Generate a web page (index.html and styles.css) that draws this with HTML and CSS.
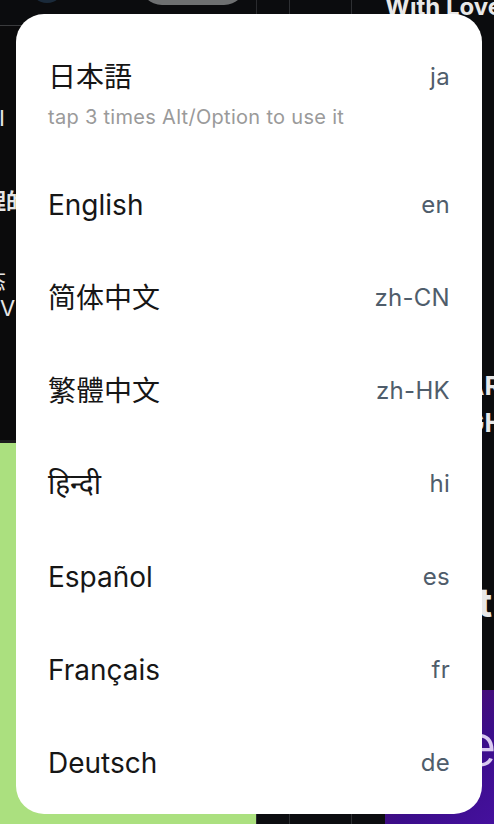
FILE: index.html
```html
<!DOCTYPE html>
<html lang="en">
<head>
    <meta charset="UTF-8">
    <meta name="viewport" content="width=device-width, initial-scale=1.0">
    <title>Language</title>
    <link rel="stylesheet" href="styles.css">
</head>
<body>
<!-- page behind the dialog -->
<div class="backdrop">
    <div class="col-left">
        <div class="pill"></div>
        <div class="dark-area">
            <div class="avatar"></div>
            <div class="frag frag-1">Use I</div>
            <div class="frag frag-2">管理的</div>
            <div class="frag frag-3">状态</div>
            <div class="frag frag-4">Wo V</div>
        </div>
        <div class="green-area"></div>
    </div>
    <div class="col-right">
        <div class="top-strip">
            <div class="cell"></div>
            <div class="cell wide"></div>
            <div class="title-frag">With Love</div>
        </div>
        <div class="side-frags">
            <div class="frag-r frag-r1">AR</div>
            <div class="frag-r frag-r2">GH</div>
            <div class="frag-r frag-r3">Let's</div>
        </div>
        <div class="bottom-strip">
            <div class="cell"></div>
            <div class="cell wide"></div>
            <div class="cell narrow"></div>
            <div class="purple-area">
                <span class="logo-e">e</span>
                <span class="logo-la">LA</span>
            </div>
        </div>
    </div>
</div>

<div class="lang-dialog">
    <ul class="lang-list">
        <li class="lang-item first">
            <div class="lang-name-wrap">
                <div class="lang-name">日本語</div>
                <div class="lang-hint">tap 3 times Alt/Option to use it</div>
            </div>
            <span class="lang-code">ja</span>
        </li>
        <li class="lang-item"><span class="lang-name">English</span><span class="lang-code">en</span></li>
        <li class="lang-item"><span class="lang-name" lang="zh-CN">简体中文</span><span class="lang-code">zh-CN</span></li>
        <li class="lang-item"><span class="lang-name" lang="zh-HK">繁體中文</span><span class="lang-code">zh-HK</span></li>
        <li class="lang-item"><span class="lang-name" lang="hi">हिन्दी</span><span class="lang-code">hi</span></li>
        <li class="lang-item"><span class="lang-name">Español</span><span class="lang-code">es</span></li>
        <li class="lang-item"><span class="lang-name">Français</span><span class="lang-code">fr</span></li>
        <li class="lang-item"><span class="lang-name">Deutsch</span><span class="lang-code">de</span></li>
    </ul>
</div>
</body>
</html>
```

FILE: styles.css
```css
* {
    margin: 0;
    padding: 0;
    box-sizing: border-box;
}
body {
    background: #0b0c0e;
    font-family: Inter, "Noto Sans CJK JP", "Noto Sans", sans-serif;
    overflow: hidden;
    height: 824px;
}

/* page behind */
.backdrop {
    display: flex;
    height: 824px;
}
.col-left {
    width: 256px;
    flex-shrink: 0;
    display: flex;
    flex-direction: column;
    position: relative;
}
.pill {
    position: absolute;
    z-index: 1;
    top: -40px;
    right: 10px;
    width: 106px;
    height: 45px;
    border-radius: 22px;
    background: #6e7071;
}
.dark-area {
    height: 443px;
    background: #0b0b0c;
    border-top: 25px solid #0b0c0e;
    border-bottom: 3px solid #1c1c1c;
    position: relative;
    padding-top: 80px;
    box-shadow: inset 0 1px 0 #3a3b3d;
}
.avatar {
    position: absolute;
    top: -56px;
    left: 30px;
    width: 34px;
    height: 34px;
    border-radius: 50%;
    background: #1a2a3a;
}
.frag {
    color: #e6e6e6;
    font-size: 22px;
    margin-left: -38px;
    white-space: nowrap;
}
.frag-1 { margin-left: -48px; }
.frag-2 { margin-top: 52px; font-weight: 600; }
.frag-3 { margin-top: 48px; }
.frag-4 { margin-left: -40px; }
.green-area {
    flex: 1;
    background: #abe07f;
}
.col-right {
    flex: 1;
    min-width: 0;
    overflow: hidden;
    display: flex;
    flex-direction: column;
    border-left: 1px solid #2a2b2e;
}
.top-strip {
    height: 30px;
    display: flex;
}
.cell {
    width: 33px;
    flex-shrink: 0;
    border-right: 1px solid #2e3033;
}
.cell.wide { width: 62px; }
.cell.narrow { width: 33px; border-right: none; }
.title-frag {
    color: #e8e8e8;
    font-weight: 700;
    font-size: 24px;
    margin-top: -8px;
    margin-left: 33px;
    white-space: nowrap;
}
.side-frags {
    flex: 1;
    padding-left: 208px;
    color: #e8e8e8;
    font-weight: 700;
    font-size: 26px;
    white-space: nowrap;
}
.frag-r1 { margin-top: 340px; }
.frag-r2 { margin-top: 6px; }
.frag-r3 { margin-top: 140px; font-size: 40px; margin-left: -34px; }
.bottom-strip {
    height: 134px;
    display: flex;
    background: #0c0d10;
}
.purple-area {
    flex: 1;
    background: linear-gradient(135deg, #5a0f5a 0%, #3b0d8a 60%, #45109e 100%);
    padding-left: 78px;
    color: #fff;
}
.logo-e {
    display: block;
    font-size: 58px;
    font-weight: 300;
    margin-top: 26px;
    line-height: 1;
    color: #d9c9f0;
}
.logo-la {
    font-size: 7px;
    letter-spacing: 2px;
    font-weight: 700;
}

/* dialog */
.lang-dialog {
    position: fixed;
    top: 14px;
    left: 16px;
    width: 466px;
    height: 800px;
    background: #fff;
    border-radius: 28px;
    padding: 0 32px;
}
.lang-list {
    list-style: none;
}
.lang-item {
    display: flex;
    justify-content: space-between;
    align-items: center;
    height: 93px;
}
.lang-item.first {
    align-items: flex-start;
    height: 144px;
    padding-top: 47px;
}
.lang-name {
    color: #161616;
    font-size: 28px;
    line-height: 32px;
}
.lang-hint {
    color: #9a9a9a;
    font-size: 20px;
    line-height: 26px;
    margin-top: 11px;
    letter-spacing: 0.3px;
}
.lang-code {
    color: #4f5d6b;
    font-size: 24px;
    line-height: 32px;
    letter-spacing: 0.3px;
}
```
